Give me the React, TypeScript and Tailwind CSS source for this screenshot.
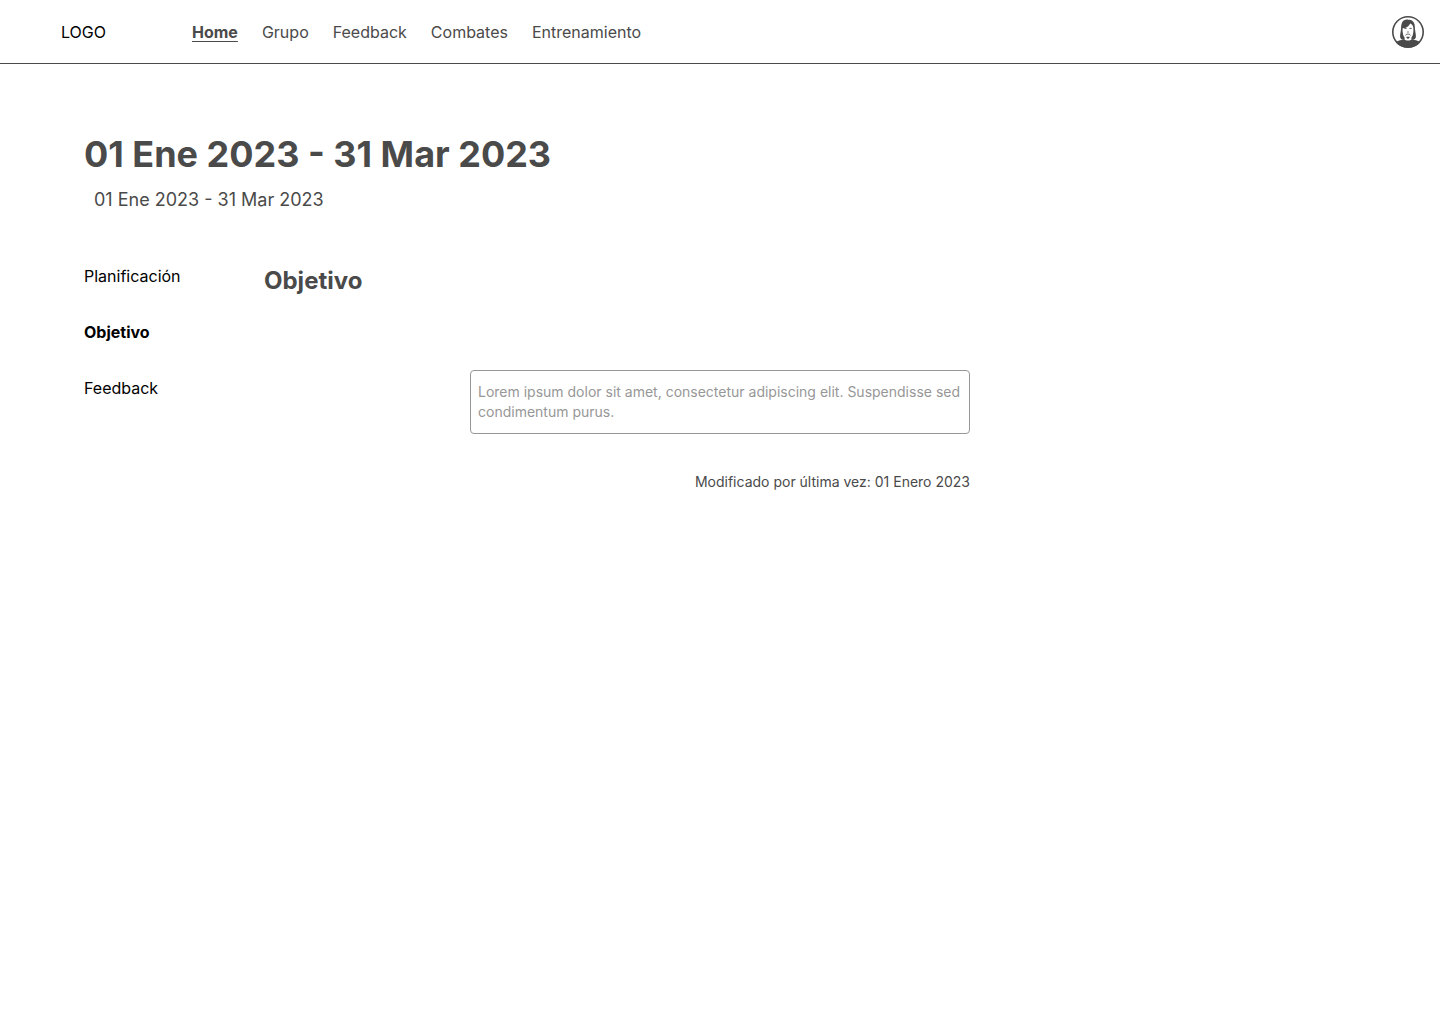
const navItems = ["Home", "Grupo", "Feedback", "Combates", "Entrenamiento"];
const sections = ["Planificación", "Objetivo", "Feedback"];

function Avatar() {
  return (
    <svg viewBox="0 0 32 32" className="size-8" aria-hidden="true">
      <circle cx="16" cy="16" r="15.2" fill="#fff" stroke="#4a4a4a" strokeWidth="1.6" />
      {/* hair */}
      <path
        fill="#4a4a4a"
        d="M16.400 3.800c-2.200-.7-4.900 0-6.200 2.400-1.200 2.300-1 5-1.300 7.800-.3 2.800-1.100 5.200-.7 7.400.3 1.300 1.500 2 3 2.200h9.600c1.500-.2 2.700-.9 3-2.200.4-2.200-.4-4.600-.7-7.400-.3-2.800-.1-5.300-1.300-7.500-1.100-2-3.400-3.200-5.400-2.700Z"
      />
      {/* shoulders */}
      <path
        fill="#4a4a4a"
        d="M3.800 26.400c1.900-1.700 4.600-2.300 7.400-3.200h9.600c2.800.9 5.500 1.500 7.400 3.200A15.400 15.400 0 0 1 16 31.400a15.400 15.400 0 0 1-12.200-5Z"
      />
      {/* face and neck */}
      <path
        fill="#fff"
        d="M18.200 7.400c2 .8 3 2.500 3.200 4.900.2 2.400 0 4.700-.6 6.700-.4 1.200-.9 2-1.400 2.600v1.900c-.8 1.300-6 1.300-6.800 0v-1.900c-.5-.6-1-1.400-1.400-2.600-.6-2-.8-4.300-.6-6.700 3.500-.3 6.200-1.900 7.600-4.900Z"
      />
      {/* goatee */}
      <path fill="#4a4a4a" d="M14.300 20.700h3.400c-.1 1.300-.7 2-1.700 2s-1.600-.7-1.700-2Z" />
      {/* features */}
      <path
        fill="none"
        stroke="#4a4a4a"
        strokeLinecap="round"
        strokeWidth="0.9"
        d="M12.700 12.400h1.500M17.800 12.400h1.500M15.600 16h.8M13.600 19.100c.4-.9 1.600-1.200 2.400-.8.800-.4 2-.1 2.400.8"
      />
    </svg>
  );
}

export default function App() {
  return (
    <div className="min-h-screen bg-white font-['Inter',sans-serif] text-base text-[#4a4a4a]">
      <header className="flex h-16 items-center border-b border-[#4a4a4a] pr-4">
        <a href="#" className="ml-[61px] w-[131px] text-black">
          LOGO
        </a>
        <nav className="flex flex-1 gap-6">
          {navItems.map((item, i) => (
            <a
              key={item}
              href="#"
              className={i === 0 ? "font-bold underline decoration-1 underline-offset-3" : ""}
            >
              {item}
            </a>
          ))}
        </nav>
        <button type="button" aria-label="Perfil">
          <Avatar />
        </button>
      </header>
      <main className="px-[84px] pt-[68px]">
        <h1 className="text-4xl leading-11 font-bold">01 Ene 2023 - 31 Mar 2023</h1>
        <p className="mt-3 ml-2.5 text-lg leading-6">01 Ene 2023 - 31 Mar 2023</p>
        <div className="mt-[52px] grid grid-cols-[180px_1fr_180px]">
          <nav className="flex flex-col items-start gap-8 text-black">
            {sections.map((item, i) => (
              <a key={item} href="#" className={i === 1 ? "font-bold" : ""}>
                {item}
              </a>
            ))}
          </nav>
          <section>
            <h2 className="text-2xl leading-[34px] font-bold">Objetivo</h2>
            <div className="mx-auto mt-[72px] max-w-[500px] text-sm">
              <textarea
                aria-label="Objetivo"
                rows={2}
                placeholder="Lorem ipsum dolor sit amet, consectetur adipiscing elit. Suspendisse sed condimentum purus."
                className="block w-full resize-none overflow-hidden rounded border border-[#979797] px-[7px] py-[11px] placeholder:text-[#979797]"
              />
              <p className="mt-[38px] text-right">Modificado por última vez: 01 Enero 2023</p>
            </div>
          </section>
        </div>
      </main>
    </div>
  );
}
